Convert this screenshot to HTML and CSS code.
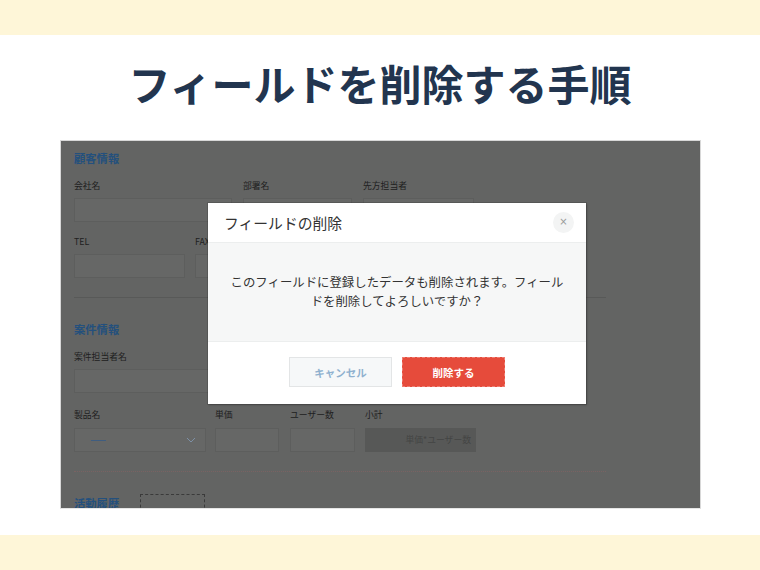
FILE: index.html
```html
<!DOCTYPE html>
<html lang="ja">
<head>
<meta charset="utf-8">
<title>フィールドを削除する手順</title>
<link rel="stylesheet" href="styles.css">
</head>
<body>
<div class="band"></div>
<main class="main">
  <h1 class="title">フィールドを削除する手順</h1>
  <div class="shot">
    <div class="form">
      <h3 class="sec">顧客情報</h3>
      <div class="row r1">
        <div class="field w158"><div class="lbl">会社名</div><div class="inp"></div></div>
        <div class="field w109"><div class="lbl">部署名</div><div class="inp"></div></div>
        <div class="field w111"><div class="lbl">先方担当者</div><div class="inp"></div></div>
      </div>
      <div class="row r2">
        <div class="field w111"><div class="lbl">TEL</div><div class="inp"></div></div>
        <div class="field w111 gap10"><div class="lbl">FAX</div><div class="inp"></div></div>
      </div>
      <div class="rule"></div>
      <h3 class="sec sec2">案件情報</h3>
      <div class="row r3">
        <div class="field w158"><div class="lbl">案件担当者名</div><div class="inp"></div></div>
      </div>
      <div class="row r4">
        <div class="field w132"><div class="lbl">製品名</div>
          <div class="inp sel"><span class="dash"></span>
            <svg class="chev" width="10" height="6" viewBox="0 0 10 6"><path d="M1 1l4 4 4-4" fill="none" stroke="#7d90a6" stroke-width="1"/></svg>
          </div>
        </div>
        <div class="field w64 g9"><div class="lbl">単価</div><div class="inp"></div></div>
        <div class="field w65 g11"><div class="lbl">ユーザー数</div><div class="inp"></div></div>
        <div class="field w111 g10"><div class="lbl">小計</div><div class="inp calc">単価*ユーザー数</div></div>
      </div>
      <div class="rule dotted"></div>
      <div class="hist">
        <h3 class="sec">活動履歴</h3>
        <div class="dbox"></div>
      </div>
    </div>
    <div class="modal">
      <div class="mhead">
        <span class="mtitle">フィールドの削除</span>
        <span class="close">×</span>
      </div>
      <div class="mbody">
        <p>このフィールドに登録したデータも削除されます。フィール<br>ドを削除してよろしいですか？</p>
      </div>
      <div class="mfoot">
        <button class="btn cancel">キャンセル</button>
        <button class="btn del">削除する</button>
      </div>
    </div>
  </div>
</main>
<div class="band"></div>
</body>
</html>
```
FILE: styles.css
```css
* { box-sizing: border-box; }
html, body { margin: 0; padding: 0; }
body {
  width: 760px;
  height: 570px;
  overflow: hidden;
  background: #ffffff;
  font-family: "Noto Sans CJK JP", "Noto Sans", sans-serif;
}
.band { height: 35px; background: #fef6d8; }
.main { height: 500px; padding-top: 23px; }
.title {
  margin: 0;
  text-align: center;
  font-size: 42px;
  line-height: 50px;
  font-weight: 700;
  color: #22354f;
}
.shot {
  position: relative;
  width: 641px;
  height: 369px;
  margin: 32px 0 0 60px;
  background: #636463;
  border: 1px solid #d8d8d8;
  border-bottom-color: #e6e6e6;
  overflow: hidden;
}
.form { padding: 0 0 0 13px; }
.sec {
  margin: 10px 0 0;
  font-size: 11.3px;
  line-height: 14px;
  font-weight: 700;
  color: #24507d;
}
.row { display: flex; }
.field { display: flex; flex-direction: column; }
.lbl {
  font-size: 8.8px;
  line-height: 12px;
  color: #202020;
  white-space: nowrap;
}
.inp {
  margin-top: 6px;
  height: 24px;
  background: #666766;
  border: 1px solid #5d5e5d;
}
.w158 { width: 158px; }
.w109 { width: 109px; margin-left: 11px; }
.w111 { width: 111px; }
.r1 .w111 { margin-left: 11px; }
.w132 { width: 132px; }
.w64 { width: 64px; }
.w65 { width: 65px; }
.gap10, .g10 { margin-left: 10px; }
.g9 { margin-left: 9px; }
.g11 { margin-left: 11px; }
.r1 { margin-top: 15px; }
.r2 { margin-top: 14px; }
.rule {
  width: 532px;
  margin-top: 19px;
  border-top: 1px solid #585958;
}
.dotted { border-top: 1px dotted #7a6262; }
.sec2 { margin-top: 24px; }
.r3 { margin-top: 15px; }
.r4 { margin-top: 16px; }
.r4 .inp { margin-top: 7px; }
.sel {
  display: flex;
  align-items: center;
  justify-content: space-between;
  padding: 0 9px 0 16px;
}
.dash { width: 15px; border-top: 1px solid #3f5d80; }
.calc {
  background: #575857;
  border-color: #575857;
  font-size: 8.8px;
  color: #444544;
  text-align: right;
  padding-right: 4px;
  line-height: 22px;
  white-space: nowrap;
}
.hist { display: flex; align-items: flex-start; margin-top: 22px; }
.hist .sec { margin-top: 2px; }
.dbox {
  margin-left: 21px;
  width: 65px;
  height: 40px;
  border: 1px dashed #3a3a3a;
}
.modal {
  position: absolute;
  left: 147px;
  top: 62px;
  width: 378px;
  height: 201px;
  background: #ffffff;
  box-shadow: 0 0 0 1px rgba(0,0,0,0.12), 1px 1px 2px rgba(0,0,0,0.25);
  display: flex;
  flex-direction: column;
}
.mhead {
  height: 40px;
  display: flex;
  align-items: center;
  justify-content: space-between;
  padding: 0 12px 0 16px;
  border-bottom: 1px solid #eceeee;
}
.mtitle {
  font-size: 14.8px;
  color: #333333;
  font-weight: 400;
}
.close {
  width: 21px;
  height: 21px;
  border-radius: 50%;
  background: #f3f4f4;
  color: #9a9a9a;
  font-size: 10px;
  line-height: 20px;
  text-align: center;
  font-family: "DejaVu Sans", sans-serif;
}
.mbody {
  height: 99px;
  background: #f6f7f7;
  border-bottom: 1px solid #eceeee;
  display: flex;
  align-items: center;
  justify-content: center;
}
.mbody p {
  margin: 0;
  text-align: center;
  font-size: 12.4px;
  line-height: 19px;
  color: #333333;
}
.mfoot {
  flex: 1;
  display: flex;
  align-items: center;
  justify-content: center;
  gap: 10px;
  padding-bottom: 2px;
}
.btn {
  width: 103px;
  height: 30px;
  font-family: "Noto Sans CJK JP", sans-serif;
  font-size: 10.5px;
  font-weight: 700;
  padding: 0;
  cursor: pointer;
}
.cancel {
  background: #f6f8f9;
  border: 1px solid #e3e5e6;
  color: #8fb1cf;
}
.del {
  background: #e64b3b;
  border: 1px dashed #f07e72;
  color: #ffffff;
}
```
